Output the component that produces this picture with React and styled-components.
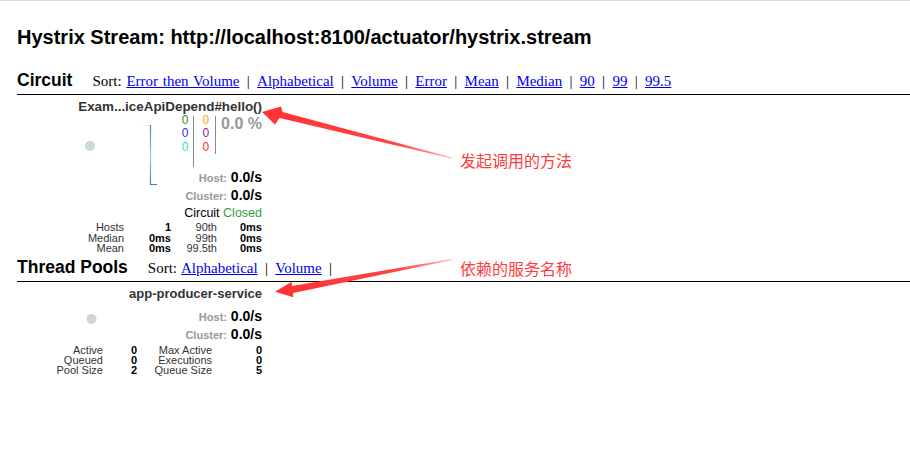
import React from "react";
import styled, { createGlobalStyle } from "styled-components";

const GlobalStyle = createGlobalStyle`
  html, body {
    margin: 0;
    padding: 0;
    background: #fff;
  }
  body {
    font-family: "Liberation Sans", Arial, sans-serif;
    color: #000;
  }
`;

const Page = styled.div`
  position: relative;
  width: 910px;
  height: 455px;
  box-sizing: border-box;
  border-top: 1px solid #dcdcdc;
  padding-left: 17px;
  overflow: hidden;
`;

const StreamTitle = styled.h1`
  margin: 24px 0 21px;
  font-size: 20px;
  line-height: 24px;
  font-weight: bold;
  white-space: nowrap;
`;

const SectionBar = styled.div`
  display: flex;
  align-items: baseline;
  margin-top: ${(p) => p.$top || 0}px;
  padding-bottom: 4px;
  border-bottom: 1px solid #000;
`;

const SectionName = styled.h2`
  margin: 0;
  font-size: 17.5px;
  line-height: 20px;
  font-weight: bold;
  white-space: nowrap;
`;

const SortMenu = styled.div`
  margin-left: 20px;
  font-family: "Liberation Serif", "Times New Roman", serif;
  font-size: 15px;
  word-spacing: 1px;
  white-space: nowrap;
`;

const SortLink = styled.a`
  color: #0000ee;
  text-decoration: underline;
  cursor: pointer;
`;

const Pipe = styled.span`
  padding: 0 7.3px;
  color: #000;
`;

const Monitor = styled.div`
  width: 245px;
`;

const MonitorName = styled.div`
  margin-top: 4px;
  text-align: right;
  font-size: ${(p) => p.$size}px;
  line-height: 15px;
  font-weight: bold;
  color: #333;
  white-space: nowrap;
`;

const MonitorBody = styled.div`
  display: flex;
  margin-top: ${(p) => p.$top || 0}px;
`;

const ChartArea = styled.svg`
  flex: none;
  display: block;
`;

const Stats = styled.div`
  flex: 1;
  text-align: right;
`;

const Counters = styled.div`
  display: flex;
  justify-content: flex-end;
  height: 55px;
`;

const CountCol = styled.div`
  font-size: 12px;
  line-height: 13.33px;
  padding: 0 ${(p) => p.$pr}px 0 ${(p) => p.$pl}px;
  text-align: right;
`;

const Count = styled.div`
  color: ${(p) => p.$color};
`;

const CountDivider = styled.div`
  width: 1px;
  height: ${(p) => p.$h}px;
  margin-top: 2px;
  background: #8a8a8a;
`;

const ErrorPct = styled.div`
  margin-left: 5px;
  font-size: 16px;
  line-height: 20px;
  font-weight: bold;
  color: #999;
  white-space: nowrap;
`;

const RateLine = styled.div`
  font-size: 14px;
  line-height: ${(p) => p.$lh}px;
  font-weight: bold;
  color: #000;
  white-space: nowrap;
`;

const RateLabel = styled.span`
  font-size: 11px;
  color: #999;
`;

const CircuitState = styled.div`
  font-size: 12.5px;
  line-height: 16px;
  color: #000;
  white-space: nowrap;
`;

const StateValue = styled.span`
  color: #3a9a3a;
`;

const StatsTable = styled.div`
  display: grid;
  grid-template-columns: ${(p) => p.$cols};
  margin-top: ${(p) => p.$top}px;
  font-size: 11px;
  line-height: ${(p) => p.$lh}px;
  text-align: right;
  white-space: nowrap;
`;

const StatLabel = styled.div`
  color: #333;
`;

const StatValue = styled.div`
  font-weight: bold;
  color: #000;
`;

const Overlay = styled.svg`
  position: absolute;
  left: 0;
  top: -1px;
  pointer-events: none;
`;

const Note = styled.div`
  position: absolute;
  left: ${(p) => p.$x}px;
  top: ${(p) => p.$y}px;
  font-family: "Noto Sans CJK SC", sans-serif;
  font-size: 16px;
  line-height: 16px;
  color: #ff3b3b;
  white-space: nowrap;
`;

const circuitSorts = ["Error then Volume", "Alphabetical", "Volume", "Error", "Mean", "Median", "90", "99", "99.5"];
const poolSorts = ["Alphabetical", "Volume"];

const circuitStats = [
  ["Hosts", "1", "90th", "0ms"],
  ["Median", "0ms", "99th", "0ms"],
  ["Mean", "0ms", "99.5th", "0ms"],
];

const poolStats = [
  ["Active", "0", "Max Active", "0"],
  ["Queued", "0", "Executions", "0"],
  ["Pool Size", "2", "Queue Size", "5"],
];

const Sorts = ({ items, trailing }) => (
  <SortMenu>
    Sort:{" "}
    {items.map((s, i) => (
      <React.Fragment key={s}>
        {i > 0 && <Pipe>|</Pipe>}
        <SortLink>{s}</SortLink>
      </React.Fragment>
    ))}
    {trailing && <Pipe>|</Pipe>}
  </SortMenu>
);

const StatRows = ({ rows, cols, lh, top }) => (
  <StatsTable $cols={cols} $lh={lh} $top={top}>
    {rows.map((r) => (
      <React.Fragment key={r[0]}>
        <StatLabel>{r[0]}</StatLabel>
        <StatValue>{r[1]}</StatValue>
        <StatLabel>{r[2]}</StatLabel>
        <StatValue>{r[3]}</StatValue>
      </React.Fragment>
    ))}
  </StatsTable>
);

export default function App() {
  return (
    <>
      <GlobalStyle />
      <Page>
        <StreamTitle>Hystrix Stream: http://localhost:8100/actuator/hystrix.stream</StreamTitle>

        <SectionBar>
          <SectionName>Circuit</SectionName>
          <Sorts items={circuitSorts} />
        </SectionBar>

        <Monitor>
          <MonitorName $size={13.4}>Exam...iceApiDepend#hello()</MonitorName>
          <MonitorBody>
            <ChartArea width="145" height="105" viewBox="0 0 145 105">
              <defs>
                <linearGradient id="axis" x1="0" y1="11" x2="0" y2="71" gradientUnits="userSpaceOnUse">
                  <stop offset="0" stopColor="#3f7fc4" />
                  <stop offset="0.5" stopColor="#a8c4e4" />
                  <stop offset="1" stopColor="#3f7fc4" />
                </linearGradient>
              </defs>
              <circle cx="73" cy="32" r="5" fill="#ccdacc" />
              <path d="M125 11.5 H133.5" stroke="#e4ecf4" strokeWidth="1" fill="none" />
              <path d="M133.5 11 V70.5 H140" stroke="url(#axis)" strokeWidth="1.2" fill="none" />
            </ChartArea>
            <Stats>
              <Counters>
                <CountCol $pl={0} $pr={5}>
                  <Count $color="#3c8c28">0</Count>
                  <Count $color="#3a2cf0">0</Count>
                  <Count $color="#3cd6c0">0</Count>
                </CountCol>
                <CountDivider $h={51} />
                <CountCol $pl={8} $pr={6}>
                  <Count $color="#ffa21a">0</Count>
                  <Count $color="#8a1a9a">0</Count>
                  <Count $color="#ff2a2a">0</Count>
                </CountCol>
                <CountDivider $h={38} />
                <ErrorPct>0.0 %</ErrorPct>
              </Counters>
              <RateLine $lh={17}>
                <RateLabel>Host:</RateLabel> 0.0/s
              </RateLine>
              <RateLine $lh={17}>
                <RateLabel>Cluster:</RateLabel> 0.0/s
              </RateLine>
              <CircuitState>
                Circuit <StateValue>Closed</StateValue>
              </CircuitState>
            </Stats>
          </MonitorBody>
          <StatRows rows={circuitStats} cols="107px 47px 46px 45px" lh={10.5} top={1} />
        </Monitor>

        <SectionBar $top={3}>
          <SectionName>Thread Pools</SectionName>
          <Sorts items={poolSorts} trailing />
        </SectionBar>

        <Monitor>
          <MonitorName $size={13}>app-producer-service</MonitorName>
          <MonitorBody $top={7.5}>
            <ChartArea width="145" height="33" viewBox="0 0 145 33">
              <circle cx="74.5" cy="11" r="5" fill="#ccdacc" />
            </ChartArea>
            <Stats>
              <RateLine $lh={16.5}>
                <RateLabel>Host:</RateLabel> 0.0/s
              </RateLine>
              <RateLine $lh={16.5}>
                <RateLabel>Cluster:</RateLabel> 0.0/s
              </RateLine>
            </Stats>
          </MonitorBody>
          <StatRows rows={poolStats} cols="86px 34px 75px 50px" lh={10.2} top={2} />
        </Monitor>

        <Overlay width="910" height="455" viewBox="0 0 910 455">
          <defs>
            <linearGradient id="arrowA" x1="262" y1="112" x2="452" y2="158" gradientUnits="userSpaceOnUse">
              <stop offset="0" stopColor="#ff3232" />
              <stop offset="0.7" stopColor="#ff4444" />
              <stop offset="1" stopColor="#ffb4b4" />
            </linearGradient>
            <linearGradient id="arrowB" x1="275" y1="292" x2="452" y2="259" gradientUnits="userSpaceOnUse">
              <stop offset="0" stopColor="#ff3232" />
              <stop offset="0.7" stopColor="#ff4444" />
              <stop offset="1" stopColor="#ffb4b4" />
            </linearGradient>
          </defs>
          <polygon
            points="262,112 281,106.5 282.5,112 452,157.6 451.5,158.6 279.5,118 275,124.5"
            fill="url(#arrowA)"
          />
          <polygon
            points="275,291.7 291.7,281.7 291.9,286.1 451.7,258.9 452,259.9 293.1,292.9 293.3,297.3"
            fill="url(#arrowB)"
          />
        </Overlay>
        <Note $x={460} $y={151}>发起调用的方法</Note>
        <Note $x={460} $y={259}>依赖的服务名称</Note>
      </Page>
    </>
  );
}
